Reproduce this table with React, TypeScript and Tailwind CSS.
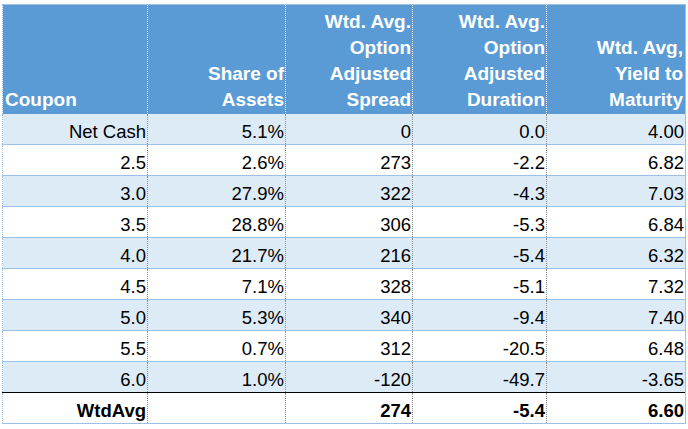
import React from "react";

const rows: [string, string, string, string, string][] = [
  ["Net Cash", "5.1%", "0", "0.0", "4.00"],
  ["2.5", "2.6%", "273", "-2.2", "6.82"],
  ["3.0", "27.9%", "322", "-4.3", "7.03"],
  ["3.5", "28.8%", "306", "-5.3", "6.84"],
  ["4.0", "21.7%", "216", "-5.4", "6.32"],
  ["4.5", "7.1%", "328", "-5.1", "7.32"],
  ["5.0", "5.3%", "340", "-9.4", "7.40"],
  ["5.5", "0.7%", "312", "-20.5", "6.48"],
  ["6.0", "1.0%", "-120", "-49.7", "-3.65"],
];

export default function App() {
  return (
    <div
      className="w-[688px] h-[429px] bg-white pt-[4px] pl-[2px]"
      style={{ fontFamily: '"Liberation Sans", Arial, sans-serif' }}
    >
      <table className="table-fixed border-collapse w-[683px] text-[18.5px] text-black">
        <colgroup>
          <col className="w-[145px]" />
          <col className="w-[138px]" />
          <col className="w-[127px]" />
          <col className="w-[134px]" />
          <col className="w-[139px]" />
        </colgroup>
        <thead>
          <tr className="h-[109px] bg-[#5b9bd5] border-t border-[#9bc2e6] text-[19px]">
            <th className="p-0 pl-[2px] pb-[1px] align-bottom text-left font-bold text-white leading-[26px] border-l border-l-[#9bc2e6] border-r border-r-white border-dotted">
              Coupon
            </th>
            <th className="p-0 pr-[1px] pb-[1px] align-bottom text-right font-bold text-white leading-[26px] border-r border-dotted border-white">
              Share of
              <br />
              Assets
            </th>
            <th className="p-0 pr-[1px] pb-[1px] align-bottom text-right font-bold text-white leading-[26px] border-r border-dotted border-white">
              Wtd. Avg.
              <br />
              Option
              <br />
              Adjusted
              <br />
              Spread
            </th>
            <th className="p-0 pr-[1px] pb-[1px] align-bottom text-right font-bold text-white leading-[26px] border-r border-dotted border-white">
              Wtd. Avg.
              <br />
              Option
              <br />
              Adjusted
              <br />
              Duration
            </th>
            <th className="p-0 pr-[2px] pb-[1px] align-bottom text-right font-bold text-white leading-[26px] border-r border-r-[#9bc2e6]">
              Wtd. Avg,
              <br />
              Yield to
              <br />
              Maturity
            </th>
          </tr>
        </thead>
        <tbody>
          {rows.map((r, i) => (
            <tr
              key={i}
              className={
                (i % 2 === 0 ? "bg-[#ddebf7] " : "bg-white ") +
                (i === rows.length - 1
                  ? "border-b border-b-black"
                  : "border-b border-b-[#9bc2e6]")
              }
            >
              {r.map((c, j) => (
                <td
                  key={j}
                  className={
                    "h-[31px] p-0 pr-[1px] pt-[5px] leading-[25px] text-right align-top " +
                    (j === 0 ? "border-l border-l-[#9bc2e6] " : "") +
                    (j === 4
                      ? "border-r border-r-[#9bc2e6]"
                      : "border-r border-dotted border-r-[#8c8c8c]")
                  }
                >
                  {c}
                </td>
              ))}
            </tr>
          ))}
          <tr className="bg-white border-b border-b-[#9bc2e6] font-bold">
            {["WtdAvg", "", "274", "-5.4", "6.60"].map((c, j) => (
              <td
                key={j}
                className={
                  "h-[30px] p-0 pr-[1px] pt-[5px] leading-[25px] text-right align-top " +
                  (j === 0 ? "border-l border-l-[#9bc2e6] " : "") +
                  (j === 4
                    ? "border-r border-r-[#9bc2e6]"
                    : "border-r border-dotted border-r-[#8c8c8c]")
                }
              >
                {c}
              </td>
            ))}
          </tr>
        </tbody>
      </table>
    </div>
  );
}
